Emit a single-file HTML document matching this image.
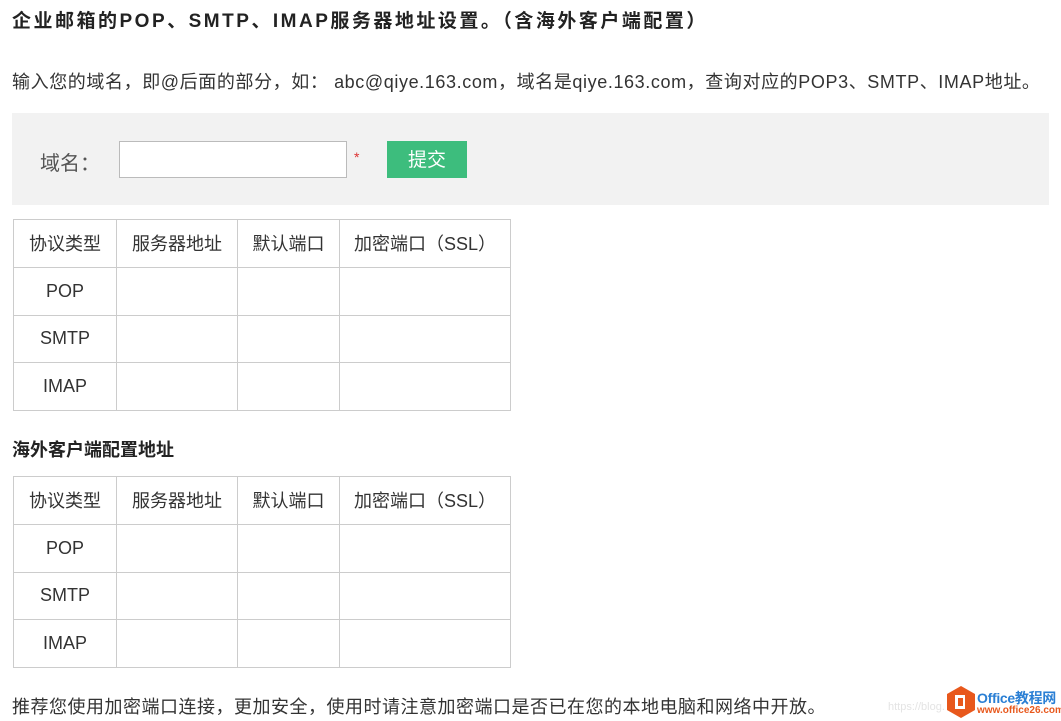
<!DOCTYPE html>
<html><head><meta charset="utf-8"><style>
body{margin:0;width:1061px;height:721px;background:#fff;position:relative;overflow:hidden;font-family:"Liberation Sans","Noto Sans CJK SC",sans-serif;color:#333}
.a{position:absolute;white-space:nowrap}
table{position:absolute;border-collapse:collapse;left:13px;font-size:18px}
td{border:1px solid #ccc;height:46.8px;text-align:center;padding:0;color:#333}
</style></head><body>
<div class="a" style="left:12px;top:6px;font-size:19px;letter-spacing:2.5px;font-weight:bold;color:#222">企业邮箱的POP、SMTP、IMAP服务器地址设置。（含海外客户端配置）</div>
<div class="a" style="left:12px;top:68px;font-size:18px;letter-spacing:0.6px">输入您的域名，即@后面的部分，如： abc@qiye.163.com，域名是qiye.163.com，查询对应的POP3、SMTP、IMAP地址。</div>
<div class="a" style="left:12px;top:113px;width:1037px;height:92px;background:#f2f2f2"></div>
<div class="a" style="left:40px;top:147px;font-size:20px;color:#555">域名：</div>
<div class="a" style="left:119px;top:141px;width:226px;height:35px;background:#fff;border:1px solid #bbb"></div>
<div class="a" style="left:354px;top:149px;font-size:14px;color:#d33">*</div>
<div class="a" style="left:387px;top:141px;width:80px;height:37px;background:#3dbd7d;color:#fff;font-size:19px;text-align:center;line-height:39px">提交</div>
<table style="top:219px">
<tr><td style="width:102px">协议类型</td><td style="width:120px">服务器地址</td><td style="width:101px">默认端口</td><td style="width:170px">加密端口（SSL）</td></tr>
<tr><td>POP</td><td></td><td></td><td></td></tr>
<tr><td>SMTP</td><td></td><td></td><td></td></tr>
<tr><td>IMAP</td><td></td><td></td><td></td></tr>
</table>
<div class="a" style="left:12px;top:436px;font-size:18px;font-weight:bold;color:#222">海外客户端配置地址</div>
<table style="top:476px">
<tr><td style="width:102px">协议类型</td><td style="width:120px">服务器地址</td><td style="width:101px">默认端口</td><td style="width:170px">加密端口（SSL）</td></tr>
<tr><td>POP</td><td></td><td></td><td></td></tr>
<tr><td>SMTP</td><td></td><td></td><td></td></tr>
<tr><td>IMAP</td><td></td><td></td><td></td></tr>
</table>
<div class="a" style="left:12px;top:693px;font-size:18px;letter-spacing:0.5px">推荐您使用加密端口连接，更加安全，使用时请注意加密端口是否已在您的本地电脑和网络中开放。</div>
<div class="a" style="left:888px;top:701px;font-size:11px;color:#e4e4e4">https://blog.</div>
<svg class="a" style="left:946px;top:685px" width="30" height="34" viewBox="0 0 30 34"><polygon points="15,1 29,9 29,25 15,33 1,25 1,9" fill="#e8581c"/><rect x="9" y="10" width="10" height="14" fill="#fff"/><rect x="12" y="13" width="5" height="8" fill="#e8581c"/></svg>
<div class="a" style="left:977px;top:688px;font-size:14px;font-weight:bold;color:#2a7fd4;letter-spacing:-0.3px">Office教程网</div>
<div class="a" style="left:977px;top:705px;font-size:10px;font-weight:bold;color:#e8581c">www.office26.com</div>
</body></html>
